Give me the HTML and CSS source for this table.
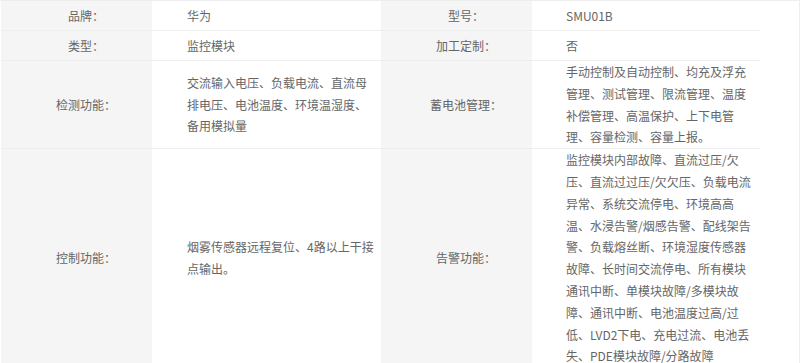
FILE: index.html
```html
<!DOCTYPE html>
<html lang="zh-CN">
<head>
<meta charset="utf-8">
<link rel="stylesheet" href="styles.css">
</head>
<body>
<div class="box">
  <div class="spec">
    <div class="row">
      <div class="label">品牌：</div>
      <div class="value">华为</div>
      <div class="label">型号：</div>
      <div class="value v2">SMU01B</div>
    </div>
    <div class="row">
      <div class="label">类型：</div>
      <div class="value">监控模块</div>
      <div class="label">加工定制：</div>
      <div class="value v2">否</div>
    </div>
    <div class="row">
      <div class="label">检测功能：</div>
      <div class="value">交流输入电压、负载电流、直流母排电压、电池温度、环境温湿度、备用模拟量</div>
      <div class="label">蓄电池管理：</div>
      <div class="value v2">手动控制及自动控制、均充及浮充管理、测试管理、限流管理、温度补偿管理、高温保护、上下电管理、容量检测、容量上报。</div>
    </div>
    <div class="row">
      <div class="label">控制功能：</div>
      <div class="value">烟雾传感器远程复位、4路以上干接点输出。</div>
      <div class="label">告警功能：</div>
      <div class="value v2">监控模块内部故障、直流过压/欠压、直流过过压/欠欠压、负载电流异常、系统交流停电、环境高高温、水浸告警/烟感告警、配线架告警、负载熔丝断、环境湿度传感器故障、长时间交流停电、所有模块通讯中断、单模块故障/多模块故障、通讯中断、电池温度过高/过低、LVD2下电、充电过流、电池丢失、PDE模块故障/分路故障</div>
    </div>
  </div>
</div>
</body>
</html>
```

FILE: styles.css
```css
* {
  box-sizing: border-box;
}

html, body {
  margin: 0;
  padding: 0;
  background: #ffffff;
}

body {
  font-family: "Microsoft YaHei", "Noto Sans CJK SC", "Noto Sans", sans-serif;
  font-size: 12px;
  color: #666666;
  width: 800px;
  height: 363px;
  overflow: hidden;
}

.box {
  width: 800px;
  border-top: 1px solid #eeeeee;
  border-right: 1px solid #eeeeee;
  padding-left: 1px;
}

.spec {
  width: 759px;
}

.row {
  display: grid;
  grid-template-columns: 151px 229px 151px 228px;
  border-bottom: 1px solid #eeeeee;
  min-height: 30px;
}

.label {
  background: #f5f5f5;
  display: flex;
  align-items: center;
  justify-content: center;
  padding-left: 19px;
  line-height: 21.8px;
}

.value {
  display: flex;
  align-items: center;
  padding-left: 35px;
  padding-right: 5px;
  line-height: 21.8px;
}

.value.v2 {
  padding-left: 34px;
  padding-right: 6px;
}
```
